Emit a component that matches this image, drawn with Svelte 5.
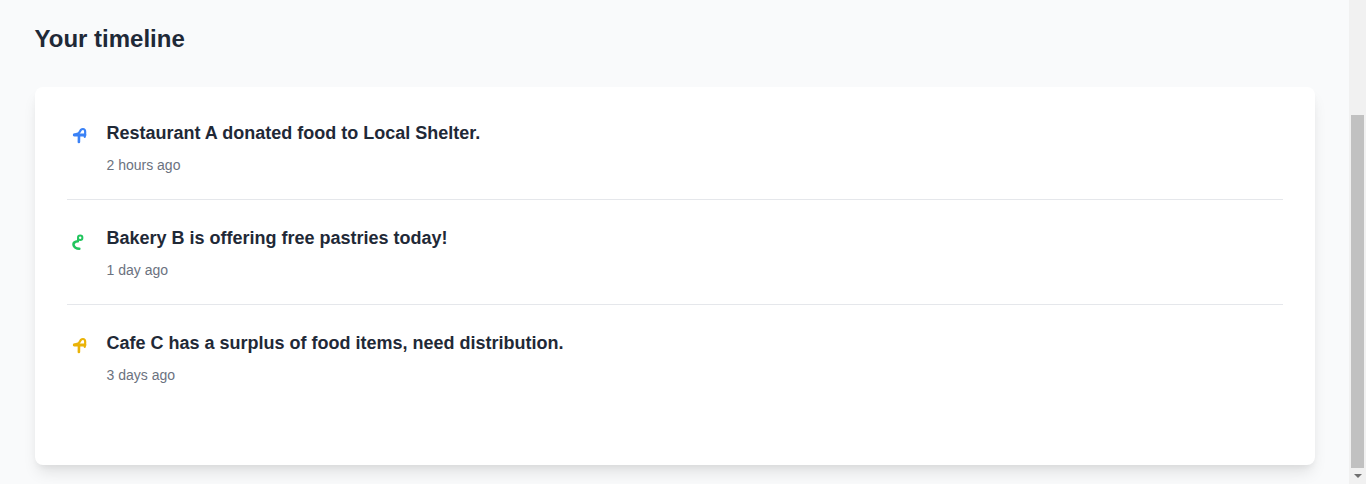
<script>
  const items = [
    { text: 'Restaurant A donated food to Local Shelter.', time: '2 hours ago', color: 'blue', kind: 'a' },
    { text: 'Bakery B is offering free pastries today!', time: '1 day ago', color: 'green', kind: 'b' },
    { text: 'Cafe C has a surplus of food items, need distribution.', time: '3 days ago', color: 'yellow', kind: 'a' }
  ];
</script>

<div class="page">
  <main class="main">
    <div class="container">
      <h2 class="title">Your timeline</h2>
      <section class="card">
        {#each items as item}
          <article class="item">
            <svg class="icon {item.color}" viewBox="0 0 24 24" width="24" height="24" fill="none" stroke="currentColor" stroke-width="2.400" stroke-linecap="round" stroke-linejoin="round" aria-hidden="true">
              {#if item.kind === 'a'}
                <path d="M7.200 11.800L11.500 10.400C12.800 9.500 13 8 14 6.800C15.200 5.600 17.200 5.700 17.900 7.200C18.500 8.700 18.300 10.500 17.700 13.800" stroke-width="2.200" />
                <path d="M7.200 12H18" stroke-width="2.800" />
                <path d="M12 12L11.900 19" stroke-width="2.600" />
              {:else}
                <circle cx="13.200" cy="9.800" r="2.200" stroke-width="2" />
                <path d="M11 11V13.200" stroke-width="2" />
                <path d="M10.800 13.300C8 13.500 6.200 14.800 6.500 16.800C6.800 19 9.500 20.800 12.300 20.800" stroke-width="2.600" />
              {/if}
            </svg>
            <div class="body">
              <p class="text">{item.text}</p>
              <p class="time">{item.time}</p>
            </div>
          </article>
        {/each}
      </section>
    </div>
  </main>
  <aside class="scrollbar" aria-hidden="true">
    <div class="thumb"></div>
    <div class="arrow"></div>
  </aside>
</div>

<style>
  :global(html), :global(body) {
    margin: 0;
    overflow: hidden;
    background: #f9fafb;
  }
  .page {
    display: flex;
    height: 484px;
    overflow: hidden;
    font-family: "Liberation Sans", Arial, sans-serif;
    background: #f9fafb;
  }
  .main {
    flex: 1;
    min-width: 0;
  }
  .container {
    width: 1280px;
    margin: 0 auto;
    padding-top: 23px;
  }
  .title {
    margin: 0 0 32px;
    font-size: 24px;
    line-height: 32px;
    font-weight: 700;
    color: #1f2937;
  }
  .card {
    background: #fff;
    border-radius: 8px;
    padding: 32px;
    box-shadow: 0 10px 15px -3px rgba(0, 0, 0, 0.1), 0 4px 6px -2px rgba(0, 0, 0, 0.05);
  }
  .item {
    display: flex;
    gap: 16px;
    padding-bottom: 24px;
    margin-bottom: 24px;
    border-bottom: 1px solid #e5e7eb;
  }
  .item:last-child {
    border-bottom: 0;
  }
  .icon {
    flex: none;
    margin-top: 4px;
  }
  .blue { color: #3b82f6; }
  .green { color: #22c55e; }
  .yellow { color: #eab308; }
  .text {
    margin: 0 0 8px;
    font-size: 18px;
    line-height: 28px;
    font-weight: 700;
    color: #1f2937;
  }
  .time {
    margin: 0;
    font-size: 14px;
    line-height: 20px;
    color: #6b7280;
  }
  .scrollbar {
    flex: none;
    width: 17px;
    box-sizing: border-box;
    background: #f1f1f1;
    padding: 115px 2px 0;
    display: flex;
    flex-direction: column;
    align-items: center;
  }
  .thumb {
    width: 13px;
    height: 353px;
    background: #c1c1c1;
  }
  .arrow {
    margin-top: 6px;
    width: 0;
    height: 0;
    border-left: 4px solid transparent;
    border-right: 4px solid transparent;
    border-top: 4px solid #707070;
  }
</style>
